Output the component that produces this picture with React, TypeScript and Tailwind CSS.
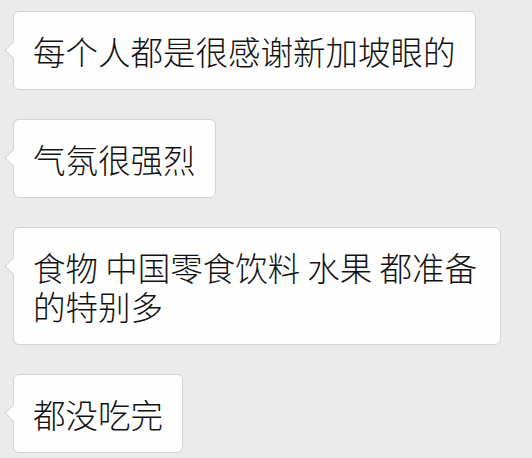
const messages = [
  "每个人都是很感谢新加坡眼的",
  "气氛很强烈",
  "食物 中国零食饮料 水果 都准备的特别多",
  "都没吃完",
];

function Bubble({ text }: { text: string }) {
  return (
    <div className="relative max-w-[488px] self-start rounded-[6px] border border-[#d3d3d3] bg-[#fefefe] px-[19px] py-[19px] text-[32.5px] font-light leading-[39px] text-[#111111]">
      {/* tail */}
      <span className="absolute left-[-7px] top-[32px] h-[12px] w-[12px] rotate-45 border-b border-l border-[#d3d3d3] bg-[#fefefe]" />
      <span className="relative">{text}</span>
    </div>
  );
}

export default function App() {
  return (
    <main
      className="flex h-[458px] w-[532px] flex-col gap-[29px] overflow-hidden bg-[#ebebeb] pl-[13px] pt-[11px]"
      style={{ fontFamily: "'Noto Sans CJK SC', 'Noto Sans', sans-serif" }}
    >
      {messages.map((m) => (
        <Bubble key={m} text={m} />
      ))}
    </main>
  );
}
